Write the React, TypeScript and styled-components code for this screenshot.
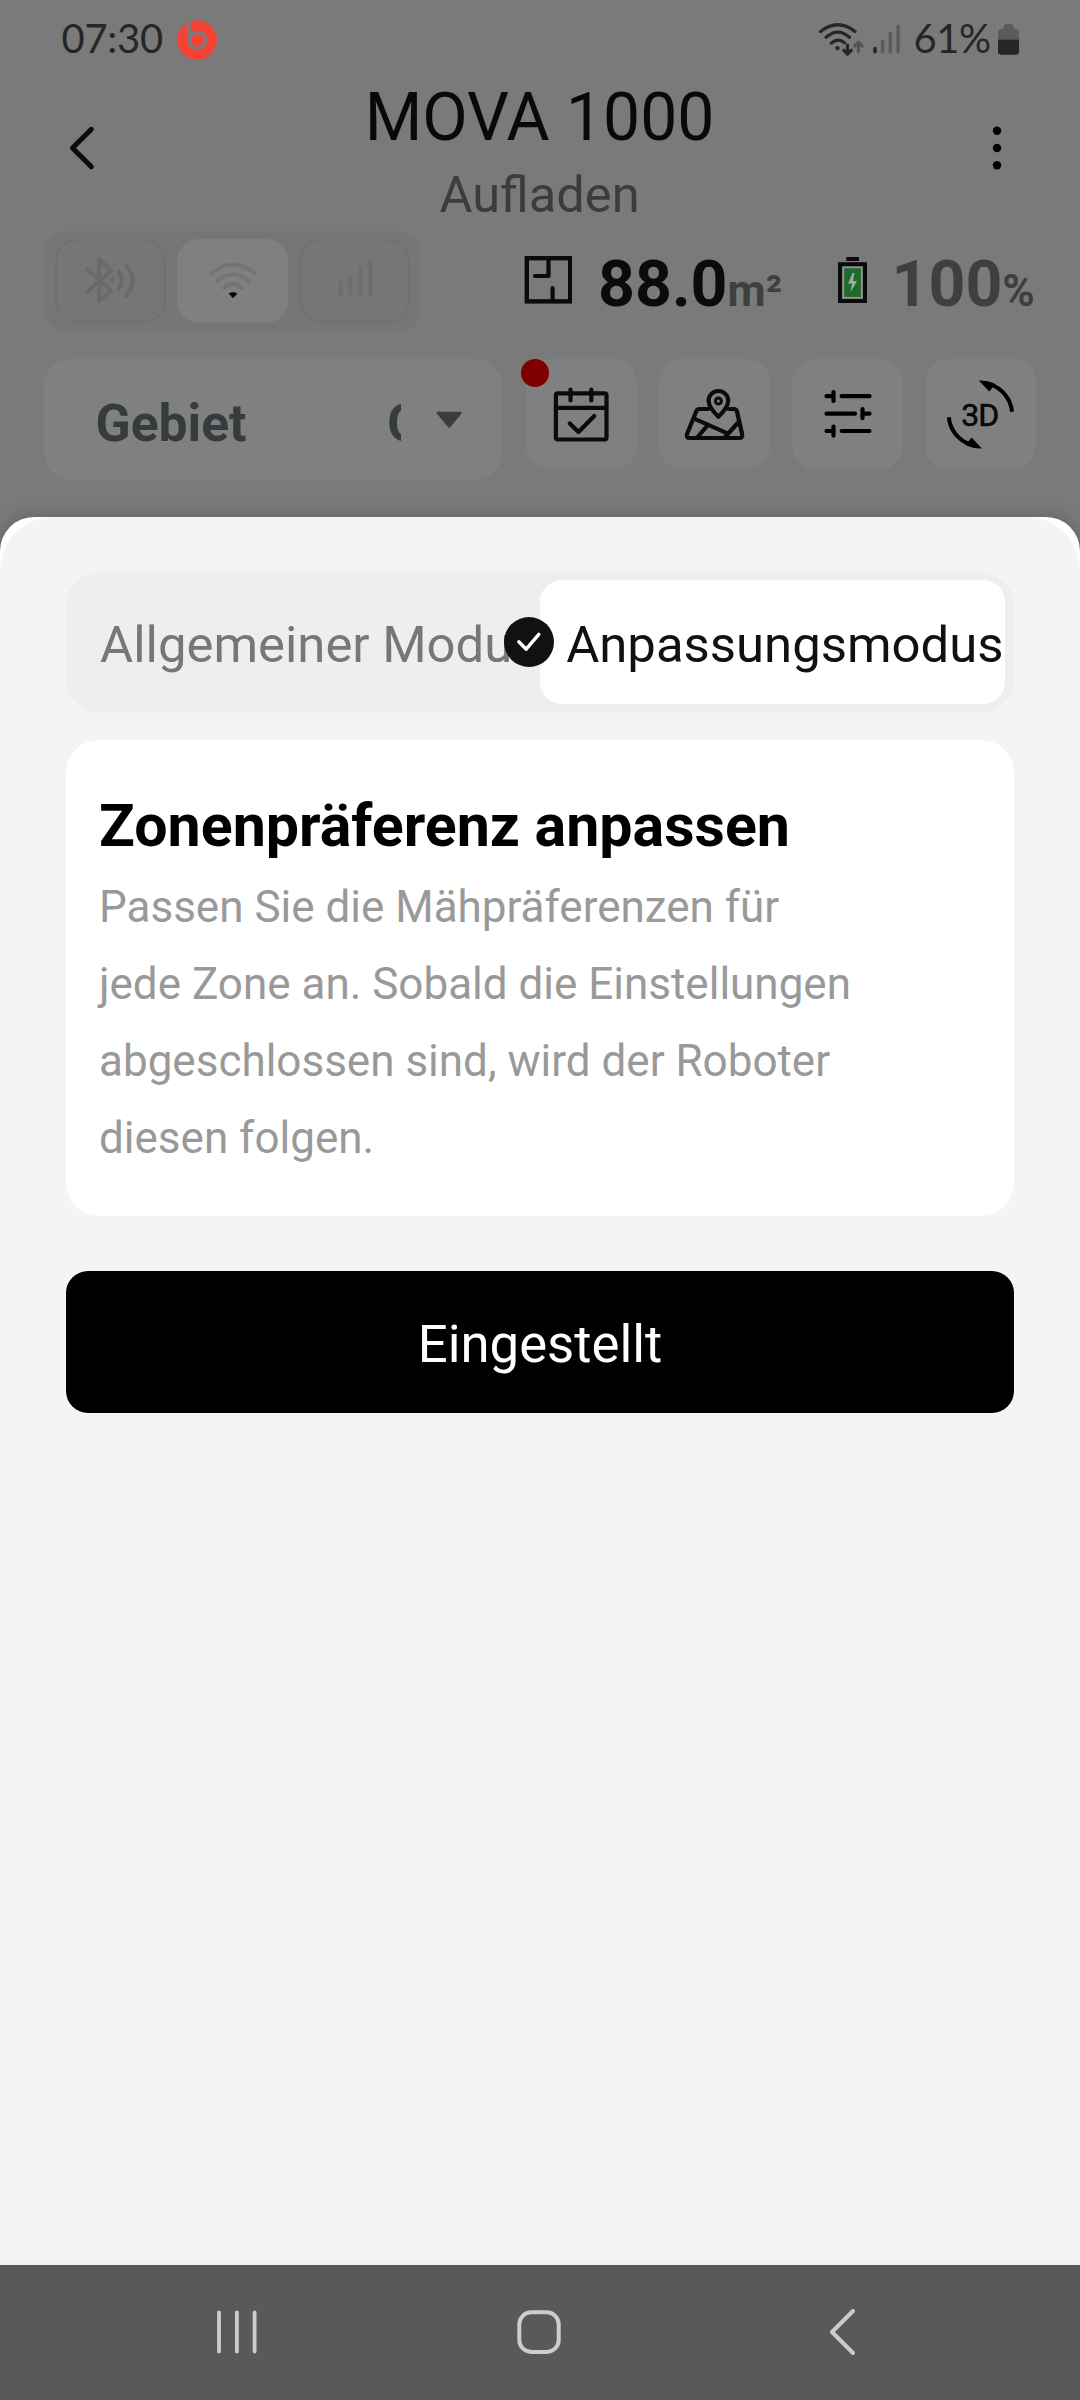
import React from "react";
import styled, { createGlobalStyle } from "styled-components";

const GlobalStyle = createGlobalStyle`
  * { box-sizing: border-box; }
  body { margin: 0; background: #7a7a7a; font-family: Roboto, "Liberation Sans", sans-serif; }
`;

const Screen = styled.div`
  width: 1080px;
  height: 2400px;
  display: flex;
  flex-direction: column;
  background: #7a7a7a;
  overflow: hidden;
`;

const Svg = styled.svg`
  display: block;
  flex: none;
`;

/* An icon whose drawing uses the coordinate window given by `box`. */
function Glyph({ box, children }: { box: [number, number, number, number]; children: React.ReactNode }) {
  return (
    <Svg width={box[2]} height={box[3]} viewBox={box.join(" ")} fill="none" strokeLinecap="round" strokeLinejoin="round">
      {children}
    </Svg>
  );
}

/* ---------- status bar ---------- */

const StatusBar = styled.div`
  height: 78px;
  flex: none;
  display: flex;
  align-items: center;
  justify-content: space-between;
  padding: 0 61px 3px 61.5px;
`;

const StatusGroup = styled.div`
  display: flex;
  align-items: center;
`;

const StatusText = styled.div<{ $width: number; $track?: number }>`
  width: ${(p) => p.$width}px;
  font: 400 40px/48px Lato, Roboto, sans-serif;
  letter-spacing: ${(p) => p.$track ?? 0}px;
  color: #262626;
  white-space: nowrap;
`;

/* ---------- header ---------- */

const Header = styled.header`
  height: 153px;
  flex: none;
  display: grid;
  grid-template-columns: 163px 1fr 164px;
`;

const HeaderAction = styled.div<{ $left: number }>`
  padding: 46px 0 0 ${(p) => p.$left}px;
`;

const HeaderTitles = styled.div`
  padding-top: 1px;
  text-align: center;
`;

const DeviceName = styled.h1`
  margin: 0;
  font-size: 66px;
  font-weight: 400;
  line-height: 77px;
  color: #090909;
`;

const DeviceState = styled.div`
  margin-top: 9px;
  font-size: 50.6px;
  line-height: 60px;
  color: #3c3c3c;
`;

/* ---------- connection and metrics ---------- */

const StatsRow = styled.div`
  height: 100px;
  flex: none;
  display: flex;
  margin-left: 44px;
`;

const Connections = styled.div`
  width: 377px;
  height: 100px;
  margin-right: 103px;
  padding: 8px 11px;
  display: flex;
  gap: 11px;
  border-radius: 22px;
  background: #767676;
`;

const ConnectionChip = styled.div<{ $active?: boolean }>`
  flex: 1;
  height: 84px;
  display: flex;
  align-items: center;
  justify-content: center;
  border-radius: 22px;
  border: 2px solid ${(p) => (p.$active ? "#808080" : "#717171")};
  background: ${(p) => (p.$active ? "#808080" : "transparent")};
`;

const Metric = styled.div<{ $width: number; $gap: number }>`
  width: ${(p) => p.$width}px;
  display: flex;
  align-items: flex-start;
  gap: ${(p) => p.$gap}px;
  padding-top: 21px;
`;

const MetricValue = styled.div<{ $color: string }>`
  font-size: 64.4px;
  font-weight: 700;
  line-height: 64px;
  white-space: nowrap;
  color: ${(p) => p.$color};
`;

const Unit = styled.span`
  font-size: 44px;
  line-height: 1;
  color: #3f3f3f;
`;

/* ---------- tools ---------- */

const ToolsRow = styled.div`
  height: 158px;
  flex: none;
  display: flex;
  align-items: flex-start;
  margin: 28px 0 0 44px;
`;

const AreaSelect = styled.div`
  width: 458px;
  height: 121px;
  margin-right: 24px;
  padding: 8px 0 0 51.5px;
  display: flex;
  align-items: center;
  border-radius: 27px;
  background: #808080;
`;

const AreaText = styled.div<{ $width: number }>`
  width: ${(p) => p.$width}px;
  overflow: hidden;
  white-space: nowrap;
  font-size: 51.6px;
  font-weight: 700;
  line-height: 60px;
  color: #363b3e;
`;

const Caret = styled.div`
  margin: -8px 0 0 35px;
`;

const ToolButtons = styled.div`
  display: flex;
  gap: 22px;
`;

const ToolButton = styled.div`
  position: relative;
  width: 111px;
  height: 110px;
  display: flex;
  align-items: center;
  justify-content: center;
  border-radius: 23px;
  background: #808080;
`;

const AlertDot = styled.span`
  position: absolute;
  left: -5px;
  top: 0;
  width: 28px;
  height: 28px;
  border-radius: 50%;
  background: #800000;
`;

/* ---------- bottom sheet ---------- */

const Sheet = styled.section`
  flex: 1;
  display: flex;
  background: #fff;
  border-radius: 34px 34px 0 0;
  box-shadow: 0 0 20px rgba(0, 0, 0, 0.22);
`;

const SheetBody = styled.div`
  flex: 1;
  padding: 55px 66px 0;
  background: #f4f4f4;
  border-radius: 54px 54px 0 0;
`;

const ModeSwitch = styled.div`
  height: 140px;
  padding: 8px 9px;
  display: flex;
  border-radius: 33px;
  background: #eee;
`;

const Mode = styled.div<{ $active?: boolean }>`
  width: 465px;
  height: 124px;
  display: flex;
  align-items: center;
  justify-content: ${(p) => (p.$active ? "flex-end" : "flex-start")};
  gap: 12px;
  padding: ${(p) => (p.$active ? "0 1.5px 0 0" : "0 0 0 25px")};
  border-radius: 22px;
  background: ${(p) => (p.$active ? "#fff" : "transparent")};
  color: ${(p) => (p.$active ? "#111" : "#777")};
`;

const ModeLabel = styled.span`
  padding-top: 5px;
  font-size: 50.85px;
  line-height: 60px;
  white-space: nowrap;
`;

const Card = styled.div`
  height: 476px;
  margin-top: 28px;
  padding: 50px 33px 0;
  border-radius: 33px;
  background: #fff;
`;

const CardTitle = styled.h2`
  margin: 0;
  font-size: 59.1px;
  font-weight: 700;
  line-height: 72px;
  color: #000;
`;

const CardText = styled.p`
  width: 765px;
  margin: 6.5px 0 0;
  font-size: 44px;
  line-height: 77px;
  color: #999;
`;

const ConfirmButton = styled.button`
  display: block;
  width: 100%;
  height: 142px;
  margin-top: 55px;
  padding: 4px 0 0;
  border: 0;
  border-radius: 22px;
  background: #000;
  color: #fff;
  font: 400 52.7px/60px Roboto, sans-serif;
`;

/* ---------- navigation ---------- */

const NavBar = styled.nav`
  height: 135px;
  flex: none;
  display: flex;
  align-items: center;
  gap: 254px;
  padding: 0 0 3px 214px;
  background: #595959;
`;

const ink = "#0b0b0b";

export default function App() {
  return (
    <Screen>
      <GlobalStyle />
      <StatusBar>
        <StatusGroup>
          <StatusText $width={114} $track={-0.3}>07:30</StatusText>
          <Glyph box={[175.5, 15.5, 42, 44]}>
            <circle cx="196.6" cy="39.5" r="19.8" fill="#f44336" />
            <path d="M188.7 18V40" stroke="#7a7a7a" strokeWidth="3.2" strokeLinecap="butt" />
            <circle cx="196.8" cy="39.8" r="8.1" stroke="#7a7a7a" strokeWidth="3.4" />
          </Glyph>
        </StatusGroup>
        <StatusGroup>
          <Glyph box={[818, 15.5, 54, 44]}>
            <g stroke="#262626" strokeWidth="3.2">
              <path d="M820.5 31Q838 17.5 855 31M826 36.8Q838 26.5 849.5 36.8M831.3 42.6Q838 36.8 844.5 42.2" />
              <path d="M847.5 44.5V53M843.8 49.8L847.5 53.6L851.3 49.8" />
            </g>
            <circle cx="837.5" cy="47.6" r="2.2" fill="#262626" />
            <path d="M858.4 51V42M854.6 45.6L858.4 41.6L862.2 45.6" stroke="#555" strokeWidth="3" />
          </Glyph>
          <Glyph box={[872, 15.5, 41.5, 44]}>
            <path d="M875 48V51.3" stroke="#262626" strokeWidth="3.6" />
            <path d="M882.6 41V51.3M890.3 33V51.3M898.1 26V51.3" stroke="#5b5b5b" strokeWidth="3.4" />
          </Glyph>
          <StatusText $width={84.5} $track={-0.4}>61%</StatusText>
          <Glyph box={[998, 15.5, 21, 44]}>
            <path d="M1003.7 28V25.5Q1003.7 23.5 1006 23.5H1011Q1013.3 23.5 1013.3 25.5V28Q1019 28 1019 32V39H998V32Q998 28 1003.7 28Z" fill="#5b5b5b" />
            <path d="M998 39H1019V51Q1019 54.3 1015.5 54.3H1001.5Q998 54.3 998 51Z" fill="#262626" />
          </Glyph>
        </StatusGroup>
      </StatusBar>

      <Header>
        <HeaderAction $left={67}>
          <Glyph box={[67, 124, 30, 48]}>
            <path d="M91.3 129.3L72.5 148L91.3 166.8" stroke={ink} strokeWidth="5" />
          </Glyph>
        </HeaderAction>
        <HeaderTitles>
          <DeviceName>MOVA 1000</DeviceName>
          <DeviceState>Aufladen</DeviceState>
        </HeaderTitles>
        <HeaderAction $left={71}>
          <Glyph box={[987, 124, 20, 48]}>
            <g fill="#000">
              <circle cx="997" cy="130.7" r="4.2" />
              <circle cx="997" cy="148" r="4.2" />
              <circle cx="997" cy="165.3" r="4.2" />
            </g>
          </Glyph>
        </HeaderAction>
      </Header>

      <StatsRow>
        <Connections>
          <ConnectionChip>
            <Glyph box={[83.3, 254, 54, 54]}>
              <path d="M86.5 269L110.5 291L98.5 301V259.5L110.5 270.5L86.5 292" stroke="#6a6a6a" strokeWidth="4" />
              <path d="M108.5 280L113.5 276V284Z" fill="#6a6a6a" />
              <path d="M118 271.5Q123.5 280 118 289M125 265Q139 280 125 296" stroke="#6a6a6a" strokeWidth="4" />
            </Glyph>
          </ConnectionChip>
          <ConnectionChip $active>
            <Glyph box={[205.4, 254, 54, 54]}>
              <path d="M210.2 274Q232.4 255 254.6 274M216.7 281Q232.4 268 248.2 281M223.5 288Q232.4 279.5 241.5 288" stroke="#747474" strokeWidth="4" />
              <path d="M228 293.5Q232.4 290.8 236.8 293.5L232.4 298.3Z" fill="#050505" />
            </Glyph>
          </ConnectionChip>
          <ConnectionChip>
            <Glyph box={[327.7, 254, 54, 54]}>
              <path d="M340.3 282.5V295.5M350 277V295.5M360 268.5V295.5M370 260V295.5" stroke="#6e6e6e" strokeWidth="4" />
            </Glyph>
          </ConnectionChip>
        </Connections>

        <Metric $width={314} $gap={26}>
          <Glyph box={[524, 252, 48, 56]}>
            <rect x="526.8" y="258.2" width="43.4" height="43.2" stroke={ink} strokeWidth="4.4" strokeLinejoin="miter" />
            <path d="M548.5 258V276H535M552.6 288V301" stroke={ink} strokeWidth="4.2" />
          </Glyph>
          <MetricValue $color={ink}>
            88.0<Unit>m²</Unit>
          </MetricValue>
        </Metric>
        <Metric $width={242} $gap={24.5}>
          <Glyph box={[838, 252, 29, 56]}>
            <rect x="846.2" y="257" width="12.8" height="4" fill={ink} />
            <rect x="840" y="264.2" width="25" height="36.8" stroke={ink} strokeWidth="4" strokeLinejoin="miter" />
            <rect x="843.3" y="267.5" width="18.4" height="30.2" stroke="#8b958c" strokeWidth="1.4" strokeLinejoin="miter" />
            <rect x="844.4" y="268.4" width="16.4" height="28.4" fill="#1e6b29" />
            <path d="M852.6 273L848 283.5H852L850.4 292.5L857 281H853L854.5 273Z" fill="#a2aaa2" />
          </Glyph>
          <MetricValue $color="#3f3f3f">
            100<Unit>%</Unit>
          </MetricValue>
        </Metric>
      </StatsRow>

      <ToolsRow>
        <AreaSelect>
          <AreaText $width={291.5}>Gebiet</AreaText>
          <AreaText $width={13.7}>G</AreaText>
          <Caret>
            <Glyph box={[436, 409, 27, 19]}>
              <path d="M438 412H460.4L449.2 425.4Z" fill="#3c3c3c" stroke="#3c3c3c" strokeWidth="2.6" />
            </Glyph>
          </Caret>
        </AreaSelect>
        <ToolButtons>
          <ToolButton>
            <AlertDot />
            <Glyph box={[552.5, 384, 60, 60]}>
              <g stroke={ink} strokeWidth="4.2">
                <rect x="556.4" y="393.3" width="50.6" height="46.2" rx="2" />
                <path d="M556.4 407.8H607M571 389.5V400.5M591.8 389.5V400.5" />
                <path d="M570.3 423.5L579 432L594.7 416" />
              </g>
            </Glyph>
          </ToolButton>
          <ToolButton>
            <Glyph box={[684.3, 384, 62, 60]}>
              <g stroke={ink} strokeWidth="4.2">
                <path d="M708.5 409H700Q697.3 409 696.5 411.5L687.3 434Q686.3 438 690 438H739.5Q743.3 438 742.4 434L737.3 411.5Q736.6 409 734 409H729" />
                <path d="M695 418.8L726.7 432.8M708.3 424.8L698 437M739.3 421.5L725.5 437" />
                <path d="M718.7 416.8Q709 407.5 708.9 400.8A9.8 9.8 0 0 1 728.5 400.8Q728.4 407.5 718.7 416.8Z" />
              </g>
              <circle cx="718.7" cy="401" r="3" stroke={ink} strokeWidth="3" />
            </Glyph>
          </ToolButton>
          <ToolButton>
            <Glyph box={[817.5, 384, 60, 60]}>
              <path
                d="M826 396.2H833M833 392V401M841.2 396.2H869M826 413.7H854.5M862 409.2V418.2M862 413.7H869M826 431H833M833 426.6V435.6M841.2 431H869"
                stroke="#000"
                strokeWidth="4.2"
              />
            </Glyph>
          </ToolButton>
          <ToolButton>
            <Glyph box={[943, 376, 75, 76]}>
              <path d="M1012 411.7A31.7 31.7 0 0 0 990 384.4" stroke="#000" strokeWidth="4" strokeLinecap="butt" />
              <path d="M978.8 380.6Q987 380.2 994.6 383.6L992.7 387.3L989.3 391.4Z" fill="#000" />
              <g transform="rotate(180 980.4 414.5)">
                <path d="M1012 411.7A31.7 31.7 0 0 0 990 384.4" stroke="#000" strokeWidth="4" strokeLinecap="butt" />
                <path d="M978.8 380.6Q987 380.2 994.6 383.6L992.7 387.3L989.3 391.4Z" fill="#000" />
              </g>
              <text
                x="961.3"
                y="425.7"
                fontSize="32"
                fontWeight="400"
                letterSpacing="-1"
                fontFamily="Roboto, sans-serif"
                fill="#080808"
                stroke="#080808"
                strokeWidth="0.6"
              >
                3D
              </text>
            </Glyph>
          </ToolButton>
        </ToolButtons>
      </ToolsRow>

      <Sheet>
        <SheetBody>
          <ModeSwitch>
            <Mode>
              <ModeLabel>Allgemeiner Modus</ModeLabel>
            </Mode>
            <Mode $active>
              <Glyph box={[504, 617, 50, 50]}>
                <circle cx="529" cy="642" r="25" fill="#111" />
                <path d="M518.8 641.8L526.2 649.2L538.8 634.4" stroke="#fff" strokeWidth="3.4" />
              </Glyph>
              <ModeLabel>Anpassungsmodus</ModeLabel>
            </Mode>
          </ModeSwitch>

          <Card>
            <CardTitle>Zonenpräferenz anpassen</CardTitle>
            <CardText>
              Passen Sie die Mähpräferenzen für jede Zone an. Sobald die Einstellungen abgeschlossen sind, wird der
              Roboter diesen folgen.
            </CardText>
          </Card>

          <ConfirmButton>Eingestellt</ConfirmButton>
        </SheetBody>
      </Sheet>

      <NavBar>
        <Glyph box={[214, 2305, 46, 52]}>
          <path d="M219 2312.5V2351.5M236.9 2312.5V2351.5M254.6 2312.5V2351.5" stroke="#cdcdcd" strokeWidth="3.8" />
        </Glyph>
        <Glyph box={[514, 2305, 50, 52]}>
          <rect x="519.3" y="2312.3" width="39.4" height="39.6" rx="12" stroke="#cdcdcd" strokeWidth="4" />
        </Glyph>
        <Glyph box={[818, 2305, 42, 52]}>
          <path d="M853 2311L832 2332L853 2353" stroke="#cdcdcd" strokeWidth="4" />
        </Glyph>
      </NavBar>
    </Screen>
  );
}
